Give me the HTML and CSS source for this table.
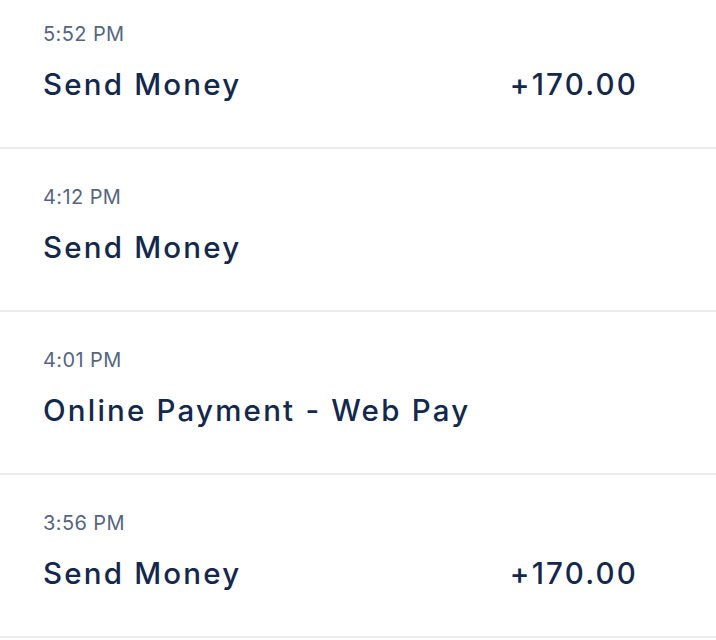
FILE: index.html
```html
<!DOCTYPE html>
<html lang="en">
<head>
    <meta charset="UTF-8">
    <meta name="viewport" content="width=device-width, initial-scale=1.0">
    <title>Transactions</title>
    <link rel="stylesheet" href="styles.css">
</head>
<body>
    <ul class="tx-list">
        <li class="tx-row">
            <div class="tx-time">5:52 PM</div>
            <div class="tx-main">
                <span class="tx-title">Send Money</span>
                <span class="tx-amount">+170.00</span>
            </div>
        </li>
        <li class="tx-row">
            <div class="tx-time">4:12 PM</div>
            <div class="tx-main">
                <span class="tx-title">Send Money</span>
            </div>
        </li>
        <li class="tx-row">
            <div class="tx-time">4:01 PM</div>
            <div class="tx-main">
                <span class="tx-title">Online Payment - Web Pay</span>
            </div>
        </li>
        <li class="tx-row">
            <div class="tx-time">3:56 PM</div>
            <div class="tx-main">
                <span class="tx-title">Send Money</span>
                <span class="tx-amount">+170.00</span>
            </div>
        </li>
    </ul>
</body>
</html>
```

FILE: styles.css
```css
body {
    margin: 0;
    background-color: #fff;
    font-family: Inter, 'Noto Sans', sans-serif;
    color: #13284b;
    overflow: hidden;
}
.tx-list {
    list-style: none;
    margin: -14px 0 0 0;
    padding: 0;
}
.tx-row {
    padding: 36px 78px 45px 43px;
    border-bottom: 2px solid #e9ebed;
}
.tx-time {
    font-size: 20px;
    line-height: 24px;
    letter-spacing: 0.4px;
    color: #56657f;
}
.tx-main {
    display: flex;
    justify-content: space-between;
    align-items: baseline;
    margin-top: 20px;
    font-size: 29.5px;
    line-height: 36px;
    font-weight: 500;
    letter-spacing: 2.2px;
}
.tx-amount {
    white-space: nowrap;
}
```
